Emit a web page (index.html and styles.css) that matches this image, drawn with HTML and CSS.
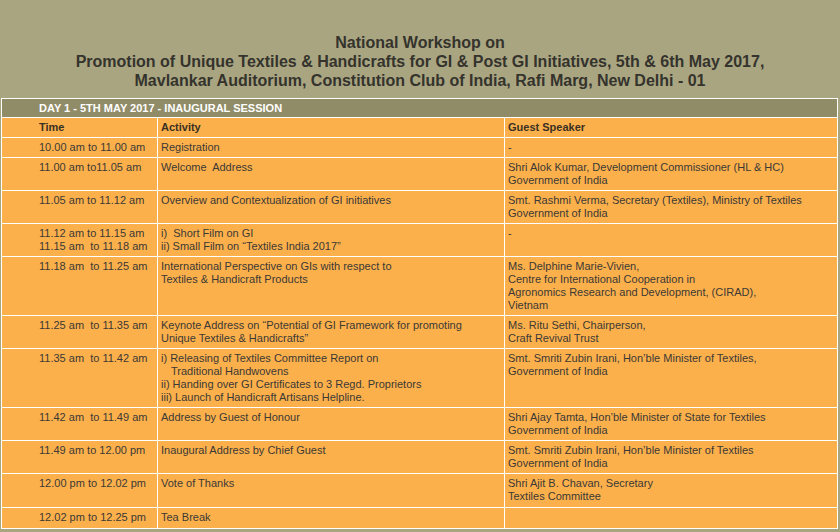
FILE: index.html
```html
<!DOCTYPE html>
<html>
<head>
<meta charset="utf-8">
<link rel="stylesheet" href="styles.css">
</head>
<body>
<div class="page">
  <header class="title">
    <div>National Workshop on</div>
    <div>Promotion of Unique Textiles &amp; Handicrafts for GI &amp; Post GI Initiatives, 5th &amp; 6th May 2017,</div>
    <div>Mavlankar Auditorium, Constitution Club of India, Rafi Marg, New Delhi - 01</div>
  </header>
  <table class="sched">
    <colgroup><col class="c1"><col class="c2"><col class="c3"></colgroup>
    <tr class="day"><td colspan="3">DAY 1 - 5TH MAY 2017 - INAUGURAL SESSION</td></tr>
    <tr class="head"><td class="time">Time</td><td>Activity</td><td>Guest Speaker</td></tr>
    <tr><td class="time">10.00 am to 11.00 am</td><td>Registration</td><td>-</td></tr>
    <tr><td class="time">11.00 am to11.05 am</td><td>Welcome&nbsp; Address</td><td>Shri Alok Kumar, Development Commissioner (HL &amp; HC)<br>Government of India</td></tr>
    <tr><td class="time">11.05 am to 11.12 am</td><td>Overview and Contextualization of GI initiatives</td><td>Smt. Rashmi Verma, Secretary (Textiles), Ministry of Textiles<br>Government of India</td></tr>
    <tr><td class="time">11.12 am to 11.15 am<br>11.15 am&nbsp; to 11.18 am</td><td>i)&nbsp; Short Film on GI<br>ii) Small Film on “Textiles India 2017”</td><td>-</td></tr>
    <tr><td class="time">11.18 am&nbsp; to 11.25 am</td><td>International Perspective on GIs with respect to<br>Textiles &amp; Handicraft Products</td><td>Ms. Delphine Marie-Vivien,<br>Centre for International Cooperation in<br>Agronomics Research and Development, (CIRAD),<br>Vietnam</td></tr>
    <tr><td class="time">11.25 am&nbsp; to 11.35 am</td><td>Keynote Address on “Potential of GI Framework for promoting<br>Unique Textiles &amp; Handicrafts”</td><td>Ms. Ritu Sethi, Chairperson,<br>Craft Revival Trust</td></tr>
    <tr><td class="time">11.35 am&nbsp; to 11.42 am</td><td>i) Releasing of Textiles Committee Report on<br><span class="indent">Traditional Handwovens</span><br>ii) Handing over GI Certificates to 3 Regd. Proprietors<br>iii) Launch of Handicraft Artisans Helpline.</td><td>Smt. Smriti Zubin Irani, Hon’ble Minister of Textiles,<br>Government of India</td></tr>
    <tr><td class="time">11.42 am&nbsp; to 11.49 am</td><td>Address by Guest of Honour</td><td>Shri Ajay Tamta, Hon’ble Minister of State for Textiles<br>Government of India</td></tr>
    <tr><td class="time">11.49 am to 12.00 pm</td><td>Inaugural Address by Chief Guest</td><td>Smt. Smriti Zubin Irani, Hon’ble Minister of Textiles<br>Government of India</td></tr>
    <tr class="tall"><td class="time">12.00 pm to 12.02 pm</td><td>Vote of Thanks</td><td>Shri Ajit B. Chavan, Secretary<br>Textiles Committee</td></tr>
    <tr class="tall"><td class="time">12.02 pm to 12.25 pm</td><td>Tea Break</td><td></td></tr>
  </table>
</div>
</body>
</html>
```
FILE: styles.css
```css
html, body {
  margin: 0;
  padding: 0;
  background: #aaa581;
}
.page {
  width: 840px;
  height: 532px;
  overflow: hidden;
  background: #aaa581;
  font-family: "Liberation Sans", Arial, sans-serif;
}
.title {
  padding: 33px 0 8px;
  text-align: center;
  font-weight: bold;
  font-size: 16px;
  line-height: 19px;
  color: #34332c;
}
.sched {
  margin-left: 1px;
  width: 837px;
  border-collapse: collapse;
  table-layout: fixed;
  font-size: 11px;
  line-height: 13px;
  color: #3b3934;
  border: 1px solid #fff;
}
.c1 { width: 156px; }
.c2 { width: 347px; }
.c3 { width: auto; }
.sched td {
  border: 1px solid #fff;
  background: #fcb04c;
  vertical-align: top;
  padding: 3px;
  white-space: nowrap;
}
.sched td.time {
  padding-left: 37px;
}
.sched .tall td {
  padding-bottom: 4px;
}
.day td {
  background: #918c68;
  color: #fff;
  font-weight: bold;
  padding: 3px 3px 2px 37px;
  font-size: 11px;
}
.head td {
  font-weight: bold;
  color: #3a3022;
}
.indent {
  padding-left: 10px;
}
```
